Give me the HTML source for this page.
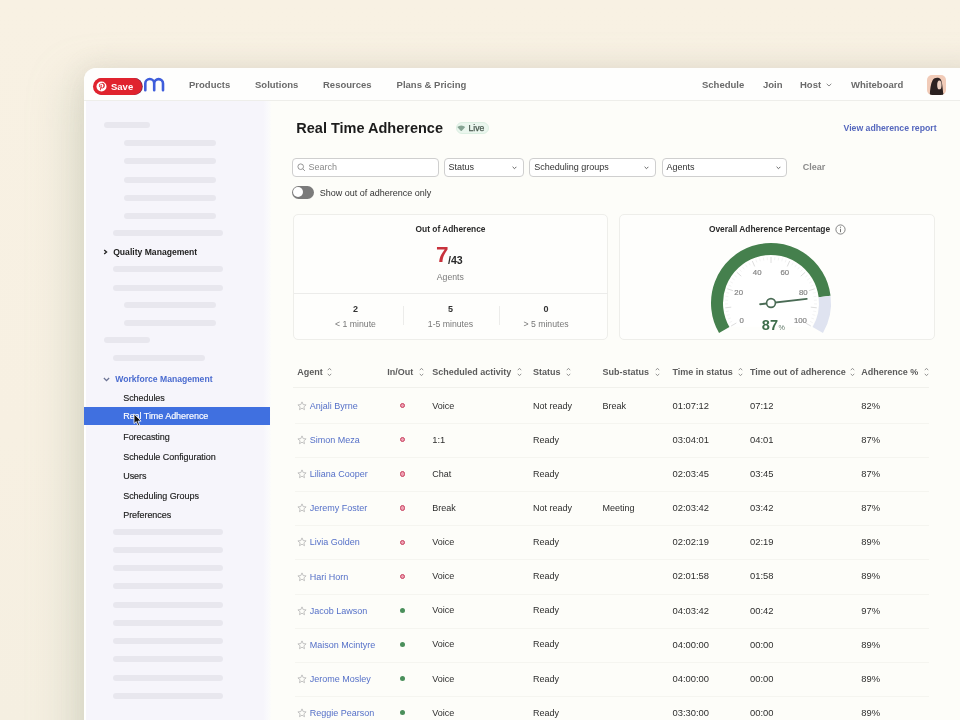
<!DOCTYPE html>
<html><head><meta charset="utf-8"><title>Real Time Adherence</title>
<style>
html,body{margin:0;padding:0;width:960px;height:720px;overflow:hidden}
body{position:relative;background:linear-gradient(180deg,#f8f1e3 0%,#f7f0e2 60%,#f5efe1 100%);font-family:"Liberation Sans",sans-serif}
.t{position:absolute;line-height:1;white-space:nowrap}
.card{position:absolute;left:84px;top:68px;width:920px;height:700px;border-radius:12px;background:#fdfdf9;box-shadow:-10px 14px 44px 2px rgba(170,182,160,0.36),0 -2px 24px rgba(205,190,175,0.3);overflow:hidden}
.hdr{position:absolute;left:84px;top:68px;width:876px;height:32px;border-radius:12px 0 0 0;background:#fefefd;border-bottom:1px solid #eeeeea}
.side{position:absolute;left:86px;top:101px;width:185px;height:619px;background:linear-gradient(90deg,#f6f5fb 0,#f6f5fb 177px,#f9f9fc 181px,#fcfcfa 185px)}
.edge{position:absolute;left:84px;top:80px;width:2px;height:640px;background:#fff}
#wrap{position:absolute;left:0;top:0;width:960px;height:720px;filter:blur(0.35px)}
</style></head><body><div id="wrap">
<div class="card"></div>
<div class="side"></div>
<div class="edge"></div>
<div class="hdr"></div>
<div style="position:absolute;left:92.5px;top:77.8px;width:49.5px;height:17.2px;border-radius:9px;background:#e0232e;box-shadow:0.8px 0 0 #6a2a55"></div>
<svg style="position:absolute;left:96px;top:80.5px" width="11" height="11" viewBox="0 0 22 22"><circle cx="11" cy="11" r="10" fill="#fff"/><path d="M11.3 4.5c-3.7 0-5.6 2.6-5.6 4.8 0 1.3.5 2.5 1.6 3 .2.1.3 0 .4-.2l.2-.6c0-.2 0-.3-.1-.4-.3-.4-.5-.9-.5-1.6 0-2.1 1.6-3.9 4.100-3.9 2.2 0 3.5 1.400 3.5 3.200 0 2.4-1.100 4.500-2.7 4.500-.9 0-1.500-.7-1.300-1.600.3-1 .7-2.200.7-2.900 0-.7-.4-1.200-1.100-1.200-.9 0-1.600.9-1.600 2.200 0 .8.3 1.400.3 1.400l-1.100 4.600c-.3 1.400 0 3.100 0 3.300h.3c.1-.1 1.200-1.500 1.600-2.900l.6-2.400c.3.6 1.200 1.100 2.200 1.100 2.900 0 4.900-2.700 4.900-6.200 0-2.700-2.300-5.200-5.700-5.200z" fill="#e0232e"/></svg>
<div class="t" style="left:111px;top:82.19px;font-size:9.5px;color:#fff;font-weight:bold;">Save</div>
<svg style="position:absolute;left:0;top:0" width="200" height="100"><path d="M145.3 90.3V83.5A4.45 4.45 0 0 1 154.2 83.5V90.3M154.2 83.5A4.4 4.4 0 0 1 163 83.5V90.3" stroke="#3e5ddb" stroke-width="2.6" fill="none" stroke-linecap="round"/></svg>
<div class="t" style="left:189px;top:79.94px;font-size:9.5px;color:#6a6a6a;font-weight:bold;">Products</div>
<div class="t" style="left:255px;top:79.94px;font-size:9.5px;color:#6a6a6a;font-weight:bold;">Solutions</div>
<div class="t" style="left:323px;top:79.94px;font-size:9.5px;color:#6a6a6a;font-weight:bold;">Resources</div>
<div class="t" style="left:396.6px;top:79.94px;font-size:9.5px;color:#6a6a6a;font-weight:bold;">Plans &amp; Pricing</div>
<div class="t" style="left:702px;top:79.94px;font-size:9.5px;color:#6a6a6a;font-weight:bold;">Schedule</div>
<div class="t" style="left:763px;top:79.94px;font-size:9.5px;color:#6a6a6a;font-weight:bold;">Join</div>
<div class="t" style="left:800px;top:79.94px;font-size:9.5px;color:#6a6a6a;font-weight:bold;">Host</div>
<div class="t" style="left:851px;top:79.94px;font-size:9.5px;color:#6a6a6a;font-weight:bold;">Whiteboard</div>
<svg style="position:absolute;left:826px;top:82.5px" width="6" height="4" viewBox="0 0 6 4"><path d="M0.7 0.8L3 3L5.3 0.8" stroke="#8a8a8a" stroke-width="1" fill="none"/></svg>
<div style="position:absolute;left:927px;top:75px;width:19px;height:20px;border-radius:5px;background:#f1cbb8;overflow:hidden"><svg width="19" height="20" viewBox="0 0 19 20"><path d="M2.8 20C3 14 3.8 8.5 5.6 5.2 7.6 2.3 11.6 2.2 13.6 4.3 15.3 6.5 15.6 13 16.4 20Z" fill="#2b2121"/><ellipse cx="12.4" cy="10" rx="2.2" ry="4.6" fill="#ecd0c2"/><path d="M12.6 14.6C13.5 16.5 14.6 18 16 19.5" stroke="#2b2121" stroke-width="1.6" fill="none"/></svg></div>
<div style="position:absolute;left:104px;top:122px;width:46px;height:6px;border-radius:3px;background:#e8e7ee"></div>
<div style="position:absolute;left:123.5px;top:140px;width:92.19999999999999px;height:6px;border-radius:3px;background:#e8e7ee"></div>
<div style="position:absolute;left:123.5px;top:158px;width:92.19999999999999px;height:6px;border-radius:3px;background:#e8e7ee"></div>
<div style="position:absolute;left:123.5px;top:176.5px;width:92.19999999999999px;height:6px;border-radius:3px;background:#e8e7ee"></div>
<div style="position:absolute;left:123.5px;top:194.5px;width:92.19999999999999px;height:6px;border-radius:3px;background:#e8e7ee"></div>
<div style="position:absolute;left:123.5px;top:212.6px;width:92.19999999999999px;height:6px;border-radius:3px;background:#e8e7ee"></div>
<div style="position:absolute;left:113px;top:230px;width:109.5px;height:6px;border-radius:3px;background:#e8e7ee"></div>
<svg style="position:absolute;left:102.5px;top:249px" width="5" height="6" viewBox="0 0 5 6"><path d="M1.2 0.9L3.6 3L1.2 5.1" stroke="#222" stroke-width="1.3" fill="none"/></svg>
<div class="t" style="left:113.2px;top:247.64px;font-size:8.6px;color:#222;font-weight:bold;">Quality Management</div>
<div style="position:absolute;left:113px;top:266.4px;width:109.5px;height:6px;border-radius:3px;background:#e8e7ee"></div>
<div style="position:absolute;left:113px;top:284.5px;width:109.5px;height:6px;border-radius:3px;background:#e8e7ee"></div>
<div style="position:absolute;left:123.5px;top:301.6px;width:92.19999999999999px;height:6px;border-radius:3px;background:#e8e7ee"></div>
<div style="position:absolute;left:123.5px;top:320px;width:92.19999999999999px;height:6px;border-radius:3px;background:#e8e7ee"></div>
<div style="position:absolute;left:104px;top:337.4px;width:46px;height:6px;border-radius:3px;background:#e8e7ee"></div>
<div style="position:absolute;left:113px;top:355.3px;width:91.80000000000001px;height:6px;border-radius:3px;background:#e8e7ee"></div>
<svg style="position:absolute;left:103px;top:376.8px" width="7" height="5" viewBox="0 0 7 5"><path d="M0.9 1L3.5 3.6L6.1 1" stroke="#6b7394" stroke-width="1.3" fill="none"/></svg>
<div class="t" style="left:115.25px;top:374.84px;font-size:8.6px;color:#4a6bcf;font-weight:bold;">Workforce Management</div>
<div style="position:absolute;left:84px;top:407.3px;width:186px;height:18px;background:#4070e0"></div>
<div class="t" style="left:123.2px;top:393.67px;font-size:9px;color:#222;font-weight:normal;letter-spacing:-0.05px;-webkit-text-stroke:0.15px #222">Schedules</div>
<div class="t" style="left:123.2px;top:412.27px;font-size:9px;color:#fff;font-weight:normal;letter-spacing:-0.05px;-webkit-text-stroke:0.15px #fff">Real Time Adherence</div>
<div class="t" style="left:123.2px;top:432.57px;font-size:9px;color:#222;font-weight:normal;letter-spacing:-0.05px;-webkit-text-stroke:0.15px #222">Forecasting</div>
<div class="t" style="left:123.2px;top:452.57px;font-size:9px;color:#222;font-weight:normal;letter-spacing:-0.05px;-webkit-text-stroke:0.15px #222">Schedule Configuration</div>
<div class="t" style="left:123.2px;top:471.77px;font-size:9px;color:#222;font-weight:normal;letter-spacing:-0.05px;-webkit-text-stroke:0.15px #222">Users</div>
<div class="t" style="left:123.2px;top:491.57px;font-size:9px;color:#222;font-weight:normal;letter-spacing:-0.05px;-webkit-text-stroke:0.15px #222">Scheduling Groups</div>
<div class="t" style="left:123.2px;top:510.97px;font-size:9px;color:#222;font-weight:normal;letter-spacing:-0.05px;-webkit-text-stroke:0.15px #222">Preferences</div>
<div style="position:absolute;left:113px;top:528.5px;width:109.5px;height:6px;border-radius:3px;background:#e8e7ee"></div>
<div style="position:absolute;left:113px;top:546.75px;width:109.5px;height:6px;border-radius:3px;background:#e8e7ee"></div>
<div style="position:absolute;left:113px;top:565.0px;width:109.5px;height:6px;border-radius:3px;background:#e8e7ee"></div>
<div style="position:absolute;left:113px;top:583.25px;width:109.5px;height:6px;border-radius:3px;background:#e8e7ee"></div>
<div style="position:absolute;left:113px;top:601.5px;width:109.5px;height:6px;border-radius:3px;background:#e8e7ee"></div>
<div style="position:absolute;left:113px;top:619.75px;width:109.5px;height:6px;border-radius:3px;background:#e8e7ee"></div>
<div style="position:absolute;left:113px;top:638.0px;width:109.5px;height:6px;border-radius:3px;background:#e8e7ee"></div>
<div style="position:absolute;left:113px;top:656.25px;width:109.5px;height:6px;border-radius:3px;background:#e8e7ee"></div>
<div style="position:absolute;left:113px;top:674.5px;width:109.5px;height:6px;border-radius:3px;background:#e8e7ee"></div>
<div style="position:absolute;left:113px;top:692.75px;width:109.5px;height:6px;border-radius:3px;background:#e8e7ee"></div>
<div class="t" style="left:296.3px;top:121.20px;font-size:14.5px;color:#1c1c1c;font-weight:bold;">Real Time Adherence</div>
<div style="position:absolute;left:455.5px;top:121.8px;width:33px;height:12px;box-sizing:border-box;border:0.6px solid #dcefe2;border-radius:6px;background:#eaf6ee"></div>
<svg style="position:absolute;left:457px;top:124.6px" width="8.5" height="6.6" viewBox="0 0 9 7"><path d="M0.3 2.2A6 6 0 0 1 8.7 2.2L4.5 6.8Z" fill="#86a493"/></svg>
<div class="t" style="left:468.6px;top:123.64px;font-size:8.6px;color:#46564c;font-weight:normal;-webkit-text-stroke:0.25px #46564c">Live</div>
<div class="t" style="left:843.5px;top:123.62px;font-size:8.7px;color:#5567bd;font-weight:bold;">View adherence report</div>
<div style="position:absolute;left:292px;top:157.5px;width:146.5px;height:19.0px;box-sizing:border-box;border:1px solid #cfcfcf;border-radius:4px;background:#fff"></div>
<svg style="position:absolute;left:297px;top:163px" width="9" height="9" viewBox="0 0 9 9"><circle cx="3.7" cy="3.7" r="2.8" stroke="#8a8a8a" stroke-width="0.9" fill="none"/><path d="M5.8 5.8L7.9 7.9" stroke="#8a8a8a" stroke-width="0.9"/></svg>
<div class="t" style="left:308.5px;top:162.57px;font-size:9px;color:#8a8a8a;font-weight:normal;">Search</div>
<div style="position:absolute;left:443.5px;top:157.5px;width:80.5px;height:19.0px;box-sizing:border-box;border:1px solid #cfcfcf;border-radius:4px;background:#fff"></div>
<div class="t" style="left:448.5px;top:162.57px;font-size:9px;color:#333;font-weight:normal;">Status</div>
<div style="position:absolute;left:529.3px;top:157.5px;width:126.70000000000005px;height:19.0px;box-sizing:border-box;border:1px solid #cfcfcf;border-radius:4px;background:#fff"></div>
<div class="t" style="left:534.3px;top:162.57px;font-size:9px;color:#333;font-weight:normal;">Scheduling groups</div>
<div style="position:absolute;left:661.7px;top:157.5px;width:125.59999999999991px;height:19.0px;box-sizing:border-box;border:1px solid #cfcfcf;border-radius:4px;background:#fff"></div>
<div class="t" style="left:666.5px;top:162.57px;font-size:9px;color:#333;font-weight:normal;">Agents</div>
<svg style="position:absolute;left:512.3px;top:165.5px" width="5" height="4" viewBox="0 0 5 4"><path d="M0.6 0.8L2.5 2.7L4.4 0.8" stroke="#666" stroke-width="1" fill="none"/></svg>
<svg style="position:absolute;left:644.3px;top:165.5px" width="5" height="4" viewBox="0 0 5 4"><path d="M0.6 0.8L2.5 2.7L4.4 0.8" stroke="#666" stroke-width="1" fill="none"/></svg>
<svg style="position:absolute;left:775.9px;top:165.5px" width="5" height="4" viewBox="0 0 5 4"><path d="M0.6 0.8L2.5 2.7L4.4 0.8" stroke="#666" stroke-width="1" fill="none"/></svg>
<div class="t" style="left:802.7px;top:162.57px;font-size:9px;color:#8a8a8a;font-weight:bold;">Clear</div>
<div style="position:absolute;left:292px;top:186px;width:22px;height:12.5px;border-radius:6.5px;background:#7b7b7b"></div>
<div style="position:absolute;left:293.3px;top:187.3px;width:10px;height:10px;border-radius:5px;background:#fff"></div>
<div class="t" style="left:319.75px;top:188.87px;font-size:9px;color:#333;font-weight:normal;">Show out of adherence only</div>
<div style="position:absolute;left:292.8px;top:213.8px;width:315.7px;height:126.5px;box-sizing:border-box;border:1px solid #eeeeea;border-radius:5px;background:#fefefc"></div>
<div style="position:absolute;left:619.2px;top:213.8px;width:316.2px;height:126.5px;box-sizing:border-box;border:1px solid #eeeeea;border-radius:5px;background:#fefefc"></div>
<div style="position:absolute;left:293.5px;top:293px;width:314.5px;height:1px;background:#ececea"></div>
<div style="position:absolute;left:402.7px;top:306px;width:1px;height:19px;background:#ececea"></div>
<div style="position:absolute;left:498.5px;top:306px;width:1px;height:19px;background:#ececea"></div>
<div class="t" style="left:300.5px;width:300px;text-align:center;top:225.37px;font-size:8.4px;color:#2a2a2a;font-weight:bold;">Out of Adherence</div>
<div class="t" style="left:436px;top:243.73px;font-size:22.5px;color:#c8323c;font-weight:bold;">7</div>
<div class="t" style="left:448px;top:254.82px;font-size:10.6px;color:#2a2a2a;font-weight:bold;">/43</div>
<div class="t" style="left:300.3px;width:300px;text-align:center;top:273.07px;font-size:8.7px;color:#7a7a7a;font-weight:normal;">Agents</div>
<div class="t" style="left:205.5px;width:300px;text-align:center;top:304.87px;font-size:9px;color:#333;font-weight:bold;">2</div>
<div class="t" style="left:205.5px;width:300px;text-align:center;top:319.72px;font-size:8.7px;color:#777;font-weight:normal;">&lt; 1 minute</div>
<div class="t" style="left:300.5px;width:300px;text-align:center;top:304.87px;font-size:9px;color:#333;font-weight:bold;">5</div>
<div class="t" style="left:300.5px;width:300px;text-align:center;top:319.72px;font-size:8.7px;color:#777;font-weight:normal;">1-5 minutes</div>
<div class="t" style="left:396px;width:300px;text-align:center;top:304.87px;font-size:9px;color:#333;font-weight:bold;">0</div>
<div class="t" style="left:396px;width:300px;text-align:center;top:319.72px;font-size:8.7px;color:#777;font-weight:normal;">&gt; 5 minutes</div>
<div class="t" style="left:619.5px;width:300px;text-align:center;top:225.37px;font-size:8.4px;color:#2a2a2a;font-weight:bold;">Overall Adherence Percentage</div>
<svg style="position:absolute;left:835px;top:223.5px" width="11" height="11" viewBox="0 0 11 11"><circle cx="5.5" cy="5.5" r="4.6" stroke="#777" stroke-width="0.9" fill="none"/><path d="M5.5 4.8V8.2" stroke="#777" stroke-width="1"/><circle cx="5.5" cy="3.2" r="0.6" fill="#777"/></svg>
<svg style="position:absolute;left:700px;top:230px" width="140" height="110" viewBox="0 0 140 110"><path d="M30.30 96.50A47 47 0 1 1 111.70 96.50Z" fill="#fff"/><path d="M24.23 100.00A54 54 0 1 1 124.60 66.42" stroke="#45804d" stroke-width="12" fill="none"/><path d="M124.60 66.42A54 54 0 0 1 117.77 100.00" stroke="#dfe3f0" stroke-width="12" fill="none"/><path d="M31.16 96.00L36.36 93.00" stroke="#dedede" stroke-width="1"/><path d="M29.38 92.59L32.09 91.31" stroke="#f0f0f0" stroke-width="0.8"/><path d="M27.89 89.03L30.70 87.99" stroke="#f0f0f0" stroke-width="0.8"/><path d="M26.69 85.37L29.58 84.56" stroke="#f0f0f0" stroke-width="0.8"/><path d="M25.81 81.62L28.76 81.06" stroke="#f0f0f0" stroke-width="0.8"/><path d="M25.25 77.81L31.22 77.18" stroke="#dedede" stroke-width="1"/><path d="M25.01 73.96L28.01 73.90" stroke="#f0f0f0" stroke-width="0.8"/><path d="M25.09 70.11L28.08 70.30" stroke="#f0f0f0" stroke-width="0.8"/><path d="M25.49 66.28L28.46 66.72" stroke="#f0f0f0" stroke-width="0.8"/><path d="M26.22 62.50L29.14 63.18" stroke="#f0f0f0" stroke-width="0.8"/><path d="M27.25 58.79L32.96 60.64" stroke="#dedede" stroke-width="1"/><path d="M28.59 55.17L31.36 56.34" stroke="#f0f0f0" stroke-width="0.8"/><path d="M30.23 51.69L32.89 53.08" stroke="#f0f0f0" stroke-width="0.8"/><path d="M32.16 48.35L34.69 49.96" stroke="#f0f0f0" stroke-width="0.8"/><path d="M34.36 45.19L36.75 47.00" stroke="#f0f0f0" stroke-width="0.8"/><path d="M36.82 42.22L41.27 46.23" stroke="#dedede" stroke-width="1"/><path d="M39.51 39.47L41.56 41.65" stroke="#f0f0f0" stroke-width="0.8"/><path d="M42.43 36.95L44.29 39.30" stroke="#f0f0f0" stroke-width="0.8"/><path d="M45.54 34.69L47.20 37.18" stroke="#f0f0f0" stroke-width="0.8"/><path d="M48.84 32.69L50.28 35.32" stroke="#f0f0f0" stroke-width="0.8"/><path d="M52.29 30.98L54.73 36.46" stroke="#dedede" stroke-width="1"/><path d="M55.87 29.56L56.86 32.39" stroke="#f0f0f0" stroke-width="0.8"/><path d="M59.56 28.45L60.31 31.35" stroke="#f0f0f0" stroke-width="0.8"/><path d="M63.33 27.64L63.83 30.60" stroke="#f0f0f0" stroke-width="0.8"/><path d="M67.15 27.16L67.40 30.15" stroke="#f0f0f0" stroke-width="0.8"/><path d="M71.00 27.00L71.00 33.00" stroke="#dedede" stroke-width="1"/><path d="M74.85 27.16L74.60 30.15" stroke="#f0f0f0" stroke-width="0.8"/><path d="M78.67 27.64L78.17 30.60" stroke="#f0f0f0" stroke-width="0.8"/><path d="M82.44 28.45L81.69 31.35" stroke="#f0f0f0" stroke-width="0.8"/><path d="M86.13 29.56L85.14 32.39" stroke="#f0f0f0" stroke-width="0.8"/><path d="M89.71 30.98L87.27 36.46" stroke="#dedede" stroke-width="1"/><path d="M93.16 32.69L91.72 35.32" stroke="#f0f0f0" stroke-width="0.8"/><path d="M96.46 34.69L94.80 37.18" stroke="#f0f0f0" stroke-width="0.8"/><path d="M99.57 36.95L97.71 39.30" stroke="#f0f0f0" stroke-width="0.8"/><path d="M102.49 39.47L100.44 41.65" stroke="#f0f0f0" stroke-width="0.8"/><path d="M105.18 42.22L100.73 46.23" stroke="#dedede" stroke-width="1"/><path d="M107.64 45.19L105.25 47.00" stroke="#f0f0f0" stroke-width="0.8"/><path d="M109.84 48.35L107.31 49.96" stroke="#f0f0f0" stroke-width="0.8"/><path d="M111.77 51.69L109.11 53.08" stroke="#f0f0f0" stroke-width="0.8"/><path d="M113.41 55.17L110.64 56.34" stroke="#f0f0f0" stroke-width="0.8"/><path d="M114.75 58.79L109.04 60.64" stroke="#dedede" stroke-width="1"/><path d="M115.78 62.50L112.86 63.18" stroke="#f0f0f0" stroke-width="0.8"/><path d="M116.51 66.28L113.54 66.72" stroke="#f0f0f0" stroke-width="0.8"/><path d="M116.91 70.11L113.92 70.30" stroke="#f0f0f0" stroke-width="0.8"/><path d="M116.99 73.96L113.99 73.90" stroke="#f0f0f0" stroke-width="0.8"/><path d="M116.75 77.81L110.78 77.18" stroke="#dedede" stroke-width="1"/><path d="M116.19 81.62L113.24 81.06" stroke="#f0f0f0" stroke-width="0.8"/><path d="M115.31 85.37L112.42 84.56" stroke="#f0f0f0" stroke-width="0.8"/><path d="M114.11 89.03L111.30 87.99" stroke="#f0f0f0" stroke-width="0.8"/><path d="M112.62 92.59L109.91 91.31" stroke="#f0f0f0" stroke-width="0.8"/><path d="M110.84 96.00L105.64 93.00" stroke="#dedede" stroke-width="1"/><text x="41.56" y="92.80" text-anchor="middle" font-family="Liberation Sans" font-size="7.8" fill="#858585" stroke="#858585" stroke-width="0.2">0</text><text x="38.66" y="65.29" text-anchor="middle" font-family="Liberation Sans" font-size="7.8" fill="#858585" stroke="#858585" stroke-width="0.2">20</text><text x="57.17" y="44.74" text-anchor="middle" font-family="Liberation Sans" font-size="7.8" fill="#858585" stroke="#858585" stroke-width="0.2">40</text><text x="84.83" y="44.74" text-anchor="middle" font-family="Liberation Sans" font-size="7.8" fill="#858585" stroke="#858585" stroke-width="0.2">60</text><text x="103.34" y="65.29" text-anchor="middle" font-family="Liberation Sans" font-size="7.8" fill="#858585" stroke="#858585" stroke-width="0.2">80</text><text x="100.44" y="92.80" text-anchor="middle" font-family="Liberation Sans" font-size="7.8" fill="#858585" stroke="#858585" stroke-width="0.2">100</text><path d="M60.07 74.25L106.77 68.92" stroke="#4a6b55" stroke-width="1.8" stroke-linecap="round"/><circle cx="71" cy="73" r="4.4" fill="#fff" stroke="#4a6b55" stroke-width="1.6"/></svg>
<div class="t" style="left:761.8px;top:317.79px;font-size:14.6px;color:#3e6d4b;font-weight:bold;">87</div>
<div class="t" style="left:778.6px;top:323.96px;font-size:7.2px;color:#60786a;font-weight:normal;">%</div>
<div class="t" style="left:297.25px;top:367.87px;font-size:9px;color:#5c5c5c;font-weight:bold;">Agent</div>
<svg style="position:absolute;left:327.25px;top:367px" width="5" height="10" viewBox="0 0 5 10"><path d="M0.8 3.2L2.5 1.3L4.2 3.2M0.8 6.8L2.5 8.7L4.2 6.8" stroke="#8a8a8a" stroke-width="0.9" fill="none"/></svg>
<div class="t" style="left:387.25px;top:367.87px;font-size:9px;color:#5c5c5c;font-weight:bold;">In/Out</div>
<svg style="position:absolute;left:418.5px;top:367px" width="5" height="10" viewBox="0 0 5 10"><path d="M0.8 3.2L2.5 1.3L4.2 3.2M0.8 6.8L2.5 8.7L4.2 6.8" stroke="#8a8a8a" stroke-width="0.9" fill="none"/></svg>
<div class="t" style="left:432.25px;top:367.87px;font-size:9px;color:#5c5c5c;font-weight:bold;">Scheduled activity</div>
<svg style="position:absolute;left:517.25px;top:367px" width="5" height="10" viewBox="0 0 5 10"><path d="M0.8 3.2L2.5 1.3L4.2 3.2M0.8 6.8L2.5 8.7L4.2 6.8" stroke="#8a8a8a" stroke-width="0.9" fill="none"/></svg>
<div class="t" style="left:533px;top:367.87px;font-size:9px;color:#5c5c5c;font-weight:bold;">Status</div>
<svg style="position:absolute;left:566.25px;top:367px" width="5" height="10" viewBox="0 0 5 10"><path d="M0.8 3.2L2.5 1.3L4.2 3.2M0.8 6.8L2.5 8.7L4.2 6.8" stroke="#8a8a8a" stroke-width="0.9" fill="none"/></svg>
<div class="t" style="left:602.5px;top:367.87px;font-size:9px;color:#5c5c5c;font-weight:bold;">Sub-status</div>
<svg style="position:absolute;left:655.0px;top:367px" width="5" height="10" viewBox="0 0 5 10"><path d="M0.8 3.2L2.5 1.3L4.2 3.2M0.8 6.8L2.5 8.7L4.2 6.8" stroke="#8a8a8a" stroke-width="0.9" fill="none"/></svg>
<div class="t" style="left:672.5px;top:367.87px;font-size:9px;color:#5c5c5c;font-weight:bold;">Time in status</div>
<svg style="position:absolute;left:737.5px;top:367px" width="5" height="10" viewBox="0 0 5 10"><path d="M0.8 3.2L2.5 1.3L4.2 3.2M0.8 6.8L2.5 8.7L4.2 6.8" stroke="#8a8a8a" stroke-width="0.9" fill="none"/></svg>
<div class="t" style="left:750px;top:367.87px;font-size:9px;color:#5c5c5c;font-weight:bold;">Time out of adherence</div>
<svg style="position:absolute;left:850.0px;top:367px" width="5" height="10" viewBox="0 0 5 10"><path d="M0.8 3.2L2.5 1.3L4.2 3.2M0.8 6.8L2.5 8.7L4.2 6.8" stroke="#8a8a8a" stroke-width="0.9" fill="none"/></svg>
<div class="t" style="left:861.25px;top:367.87px;font-size:9px;color:#5c5c5c;font-weight:bold;">Adherence %</div>
<svg style="position:absolute;left:923.75px;top:367px" width="5" height="10" viewBox="0 0 5 10"><path d="M0.8 3.2L2.5 1.3L4.2 3.2M0.8 6.8L2.5 8.7L4.2 6.8" stroke="#8a8a8a" stroke-width="0.9" fill="none"/></svg>
<div style="position:absolute;left:293px;top:387px;width:636px;height:1px;background:#f1f1ec"></div>
<div style="position:absolute;left:295px;top:423.00px;width:634px;height:1px;background:#f5f5f0"></div>
<svg style="position:absolute;left:297px;top:401.05px" width="10" height="10" viewBox="0 0 10 10"><path d="M5 0.9L6.2 3.6L9.1 3.9L6.9 5.8L7.5 8.7L5 7.2L2.5 8.7L3.1 5.8L0.9 3.9L3.8 3.6Z" stroke="#b5b5b5" stroke-width="0.8" fill="none" stroke-linejoin="round"/></svg>
<div class="t" style="left:309.75px;top:402.07px;font-size:9px;color:#5570c8;font-weight:normal;">Anjali Byrne</div>
<div style="position:absolute;left:400.0px;top:403.15px;width:5.2px;height:5.2px;box-sizing:border-box;border:1.5px solid #c8405f;border-radius:50%;background:#ee9fb2"></div>
<div class="t" style="left:432.25px;top:401.77px;font-size:9px;color:#2e2e2e;font-weight:normal;">Voice</div>
<div class="t" style="left:533px;top:401.77px;font-size:9px;color:#2e2e2e;font-weight:normal;">Not ready</div>
<div class="t" style="left:602.5px;top:401.77px;font-size:9px;color:#2e2e2e;font-weight:normal;">Break</div>
<div class="t" style="left:672.5px;top:400.96px;font-size:9.4px;color:#2e2e2e;font-weight:normal;">01:07:12</div>
<div class="t" style="left:750px;top:400.96px;font-size:9.4px;color:#2e2e2e;font-weight:normal;">07:12</div>
<div class="t" style="left:861.25px;top:400.96px;font-size:9.4px;color:#2e2e2e;font-weight:normal;">82%</div>
<div style="position:absolute;left:295px;top:457.10px;width:634px;height:1px;background:#f5f5f0"></div>
<svg style="position:absolute;left:297px;top:435.15px" width="10" height="10" viewBox="0 0 10 10"><path d="M5 0.9L6.2 3.6L9.1 3.9L6.9 5.8L7.5 8.7L5 7.2L2.5 8.7L3.1 5.8L0.9 3.9L3.8 3.6Z" stroke="#b5b5b5" stroke-width="0.8" fill="none" stroke-linejoin="round"/></svg>
<div class="t" style="left:309.75px;top:436.17px;font-size:9px;color:#5570c8;font-weight:normal;">Simon Meza</div>
<div style="position:absolute;left:400.0px;top:437.25px;width:5.2px;height:5.2px;box-sizing:border-box;border:1.5px solid #c8405f;border-radius:50%;background:#ee9fb2"></div>
<div class="t" style="left:432.25px;top:435.06px;font-size:9.4px;color:#2e2e2e;font-weight:normal;">1:1</div>
<div class="t" style="left:533px;top:435.87px;font-size:9px;color:#2e2e2e;font-weight:normal;">Ready</div>
<div class="t" style="left:672.5px;top:435.06px;font-size:9.4px;color:#2e2e2e;font-weight:normal;">03:04:01</div>
<div class="t" style="left:750px;top:435.06px;font-size:9.4px;color:#2e2e2e;font-weight:normal;">04:01</div>
<div class="t" style="left:861.25px;top:435.06px;font-size:9.4px;color:#2e2e2e;font-weight:normal;">87%</div>
<div style="position:absolute;left:295px;top:491.20px;width:634px;height:1px;background:#f5f5f0"></div>
<svg style="position:absolute;left:297px;top:469.25px" width="10" height="10" viewBox="0 0 10 10"><path d="M5 0.9L6.2 3.6L9.1 3.9L6.9 5.8L7.5 8.7L5 7.2L2.5 8.7L3.1 5.8L0.9 3.9L3.8 3.6Z" stroke="#b5b5b5" stroke-width="0.8" fill="none" stroke-linejoin="round"/></svg>
<div class="t" style="left:309.75px;top:470.27px;font-size:9px;color:#5570c8;font-weight:normal;">Liliana Cooper</div>
<div style="position:absolute;left:400.0px;top:471.35px;width:5.2px;height:5.2px;box-sizing:border-box;border:1.5px solid #c8405f;border-radius:50%;background:#ee9fb2"></div>
<div class="t" style="left:432.25px;top:469.97px;font-size:9px;color:#2e2e2e;font-weight:normal;">Chat</div>
<div class="t" style="left:533px;top:469.97px;font-size:9px;color:#2e2e2e;font-weight:normal;">Ready</div>
<div class="t" style="left:672.5px;top:469.16px;font-size:9.4px;color:#2e2e2e;font-weight:normal;">02:03:45</div>
<div class="t" style="left:750px;top:469.16px;font-size:9.4px;color:#2e2e2e;font-weight:normal;">03:45</div>
<div class="t" style="left:861.25px;top:469.16px;font-size:9.4px;color:#2e2e2e;font-weight:normal;">87%</div>
<div style="position:absolute;left:295px;top:525.30px;width:634px;height:1px;background:#f5f5f0"></div>
<svg style="position:absolute;left:297px;top:503.35px" width="10" height="10" viewBox="0 0 10 10"><path d="M5 0.9L6.2 3.6L9.1 3.9L6.9 5.8L7.5 8.7L5 7.2L2.5 8.7L3.1 5.8L0.9 3.9L3.8 3.6Z" stroke="#b5b5b5" stroke-width="0.8" fill="none" stroke-linejoin="round"/></svg>
<div class="t" style="left:309.75px;top:504.37px;font-size:9px;color:#5570c8;font-weight:normal;">Jeremy Foster</div>
<div style="position:absolute;left:400.0px;top:505.45px;width:5.2px;height:5.2px;box-sizing:border-box;border:1.5px solid #c8405f;border-radius:50%;background:#ee9fb2"></div>
<div class="t" style="left:432.25px;top:504.07px;font-size:9px;color:#2e2e2e;font-weight:normal;">Break</div>
<div class="t" style="left:533px;top:504.07px;font-size:9px;color:#2e2e2e;font-weight:normal;">Not ready</div>
<div class="t" style="left:602.5px;top:504.07px;font-size:9px;color:#2e2e2e;font-weight:normal;">Meeting</div>
<div class="t" style="left:672.5px;top:503.26px;font-size:9.4px;color:#2e2e2e;font-weight:normal;">02:03:42</div>
<div class="t" style="left:750px;top:503.26px;font-size:9.4px;color:#2e2e2e;font-weight:normal;">03:42</div>
<div class="t" style="left:861.25px;top:503.26px;font-size:9.4px;color:#2e2e2e;font-weight:normal;">87%</div>
<div style="position:absolute;left:295px;top:559.40px;width:634px;height:1px;background:#f5f5f0"></div>
<svg style="position:absolute;left:297px;top:537.45px" width="10" height="10" viewBox="0 0 10 10"><path d="M5 0.9L6.2 3.6L9.1 3.9L6.9 5.8L7.5 8.7L5 7.2L2.5 8.7L3.1 5.8L0.9 3.9L3.8 3.6Z" stroke="#b5b5b5" stroke-width="0.8" fill="none" stroke-linejoin="round"/></svg>
<div class="t" style="left:309.75px;top:538.47px;font-size:9px;color:#5570c8;font-weight:normal;">Livia Golden</div>
<div style="position:absolute;left:400.0px;top:539.55px;width:5.2px;height:5.2px;box-sizing:border-box;border:1.5px solid #c8405f;border-radius:50%;background:#ee9fb2"></div>
<div class="t" style="left:432.25px;top:538.17px;font-size:9px;color:#2e2e2e;font-weight:normal;">Voice</div>
<div class="t" style="left:533px;top:538.17px;font-size:9px;color:#2e2e2e;font-weight:normal;">Ready</div>
<div class="t" style="left:672.5px;top:537.36px;font-size:9.4px;color:#2e2e2e;font-weight:normal;">02:02:19</div>
<div class="t" style="left:750px;top:537.36px;font-size:9.4px;color:#2e2e2e;font-weight:normal;">02:19</div>
<div class="t" style="left:861.25px;top:537.36px;font-size:9.4px;color:#2e2e2e;font-weight:normal;">89%</div>
<div style="position:absolute;left:295px;top:593.50px;width:634px;height:1px;background:#f5f5f0"></div>
<svg style="position:absolute;left:297px;top:571.55px" width="10" height="10" viewBox="0 0 10 10"><path d="M5 0.9L6.2 3.6L9.1 3.9L6.9 5.8L7.5 8.7L5 7.2L2.5 8.7L3.1 5.8L0.9 3.9L3.8 3.6Z" stroke="#b5b5b5" stroke-width="0.8" fill="none" stroke-linejoin="round"/></svg>
<div class="t" style="left:309.75px;top:572.57px;font-size:9px;color:#5570c8;font-weight:normal;">Hari Horn</div>
<div style="position:absolute;left:400.0px;top:573.65px;width:5.2px;height:5.2px;box-sizing:border-box;border:1.5px solid #c8405f;border-radius:50%;background:#ee9fb2"></div>
<div class="t" style="left:432.25px;top:572.27px;font-size:9px;color:#2e2e2e;font-weight:normal;">Voice</div>
<div class="t" style="left:533px;top:572.27px;font-size:9px;color:#2e2e2e;font-weight:normal;">Ready</div>
<div class="t" style="left:672.5px;top:571.46px;font-size:9.4px;color:#2e2e2e;font-weight:normal;">02:01:58</div>
<div class="t" style="left:750px;top:571.46px;font-size:9.4px;color:#2e2e2e;font-weight:normal;">01:58</div>
<div class="t" style="left:861.25px;top:571.46px;font-size:9.4px;color:#2e2e2e;font-weight:normal;">89%</div>
<div style="position:absolute;left:295px;top:627.60px;width:634px;height:1px;background:#f5f5f0"></div>
<svg style="position:absolute;left:297px;top:605.65px" width="10" height="10" viewBox="0 0 10 10"><path d="M5 0.9L6.2 3.6L9.1 3.9L6.9 5.8L7.5 8.7L5 7.2L2.5 8.7L3.1 5.8L0.9 3.9L3.8 3.6Z" stroke="#b5b5b5" stroke-width="0.8" fill="none" stroke-linejoin="round"/></svg>
<div class="t" style="left:309.75px;top:606.67px;font-size:9px;color:#5570c8;font-weight:normal;">Jacob Lawson</div>
<div style="position:absolute;left:400.1px;top:607.85px;width:5px;height:5px;border-radius:50%;background:#4a8f5b"></div>
<div class="t" style="left:432.25px;top:606.37px;font-size:9px;color:#2e2e2e;font-weight:normal;">Voice</div>
<div class="t" style="left:533px;top:606.37px;font-size:9px;color:#2e2e2e;font-weight:normal;">Ready</div>
<div class="t" style="left:672.5px;top:605.56px;font-size:9.4px;color:#2e2e2e;font-weight:normal;">04:03:42</div>
<div class="t" style="left:750px;top:605.56px;font-size:9.4px;color:#2e2e2e;font-weight:normal;">00:42</div>
<div class="t" style="left:861.25px;top:605.56px;font-size:9.4px;color:#2e2e2e;font-weight:normal;">97%</div>
<div style="position:absolute;left:295px;top:661.70px;width:634px;height:1px;background:#f5f5f0"></div>
<svg style="position:absolute;left:297px;top:639.75px" width="10" height="10" viewBox="0 0 10 10"><path d="M5 0.9L6.2 3.6L9.1 3.9L6.9 5.8L7.5 8.7L5 7.2L2.5 8.7L3.1 5.8L0.9 3.9L3.8 3.6Z" stroke="#b5b5b5" stroke-width="0.8" fill="none" stroke-linejoin="round"/></svg>
<div class="t" style="left:309.75px;top:640.77px;font-size:9px;color:#5570c8;font-weight:normal;">Maison Mcintyre</div>
<div style="position:absolute;left:400.1px;top:641.95px;width:5px;height:5px;border-radius:50%;background:#4a8f5b"></div>
<div class="t" style="left:432.25px;top:640.47px;font-size:9px;color:#2e2e2e;font-weight:normal;">Voice</div>
<div class="t" style="left:533px;top:640.47px;font-size:9px;color:#2e2e2e;font-weight:normal;">Ready</div>
<div class="t" style="left:672.5px;top:639.66px;font-size:9.4px;color:#2e2e2e;font-weight:normal;">04:00:00</div>
<div class="t" style="left:750px;top:639.66px;font-size:9.4px;color:#2e2e2e;font-weight:normal;">00:00</div>
<div class="t" style="left:861.25px;top:639.66px;font-size:9.4px;color:#2e2e2e;font-weight:normal;">89%</div>
<div style="position:absolute;left:295px;top:695.80px;width:634px;height:1px;background:#f5f5f0"></div>
<svg style="position:absolute;left:297px;top:673.85px" width="10" height="10" viewBox="0 0 10 10"><path d="M5 0.9L6.2 3.6L9.1 3.9L6.9 5.8L7.5 8.7L5 7.2L2.5 8.7L3.1 5.8L0.9 3.9L3.8 3.6Z" stroke="#b5b5b5" stroke-width="0.8" fill="none" stroke-linejoin="round"/></svg>
<div class="t" style="left:309.75px;top:674.87px;font-size:9px;color:#5570c8;font-weight:normal;">Jerome Mosley</div>
<div style="position:absolute;left:400.1px;top:676.05px;width:5px;height:5px;border-radius:50%;background:#4a8f5b"></div>
<div class="t" style="left:432.25px;top:674.57px;font-size:9px;color:#2e2e2e;font-weight:normal;">Voice</div>
<div class="t" style="left:533px;top:674.57px;font-size:9px;color:#2e2e2e;font-weight:normal;">Ready</div>
<div class="t" style="left:672.5px;top:673.76px;font-size:9.4px;color:#2e2e2e;font-weight:normal;">04:00:00</div>
<div class="t" style="left:750px;top:673.76px;font-size:9.4px;color:#2e2e2e;font-weight:normal;">00:00</div>
<div class="t" style="left:861.25px;top:673.76px;font-size:9.4px;color:#2e2e2e;font-weight:normal;">89%</div>
<div style="position:absolute;left:295px;top:729.90px;width:634px;height:1px;background:#f5f5f0"></div>
<svg style="position:absolute;left:297px;top:707.95px" width="10" height="10" viewBox="0 0 10 10"><path d="M5 0.9L6.2 3.6L9.1 3.9L6.9 5.8L7.5 8.7L5 7.2L2.5 8.7L3.1 5.8L0.9 3.9L3.8 3.6Z" stroke="#b5b5b5" stroke-width="0.8" fill="none" stroke-linejoin="round"/></svg>
<div class="t" style="left:309.75px;top:708.97px;font-size:9px;color:#5570c8;font-weight:normal;">Reggie Pearson</div>
<div style="position:absolute;left:400.1px;top:710.15px;width:5px;height:5px;border-radius:50%;background:#4a8f5b"></div>
<div class="t" style="left:432.25px;top:708.67px;font-size:9px;color:#2e2e2e;font-weight:normal;">Voice</div>
<div class="t" style="left:533px;top:708.67px;font-size:9px;color:#2e2e2e;font-weight:normal;">Ready</div>
<div class="t" style="left:672.5px;top:707.86px;font-size:9.4px;color:#2e2e2e;font-weight:normal;">03:30:00</div>
<div class="t" style="left:750px;top:707.86px;font-size:9.4px;color:#2e2e2e;font-weight:normal;">00:00</div>
<div class="t" style="left:861.25px;top:707.86px;font-size:9.4px;color:#2e2e2e;font-weight:normal;">89%</div>
<svg style="position:absolute;left:133px;top:412.5px" width="9" height="14" viewBox="0 0 9 14"><path d="M1 0.8V10.6L3.3 8.6L5 12.6L6.6 11.9L5 8.1H8.1Z" fill="#111" stroke="#fff" stroke-width="0.8" stroke-linejoin="round"/></svg>
</div></body></html>
